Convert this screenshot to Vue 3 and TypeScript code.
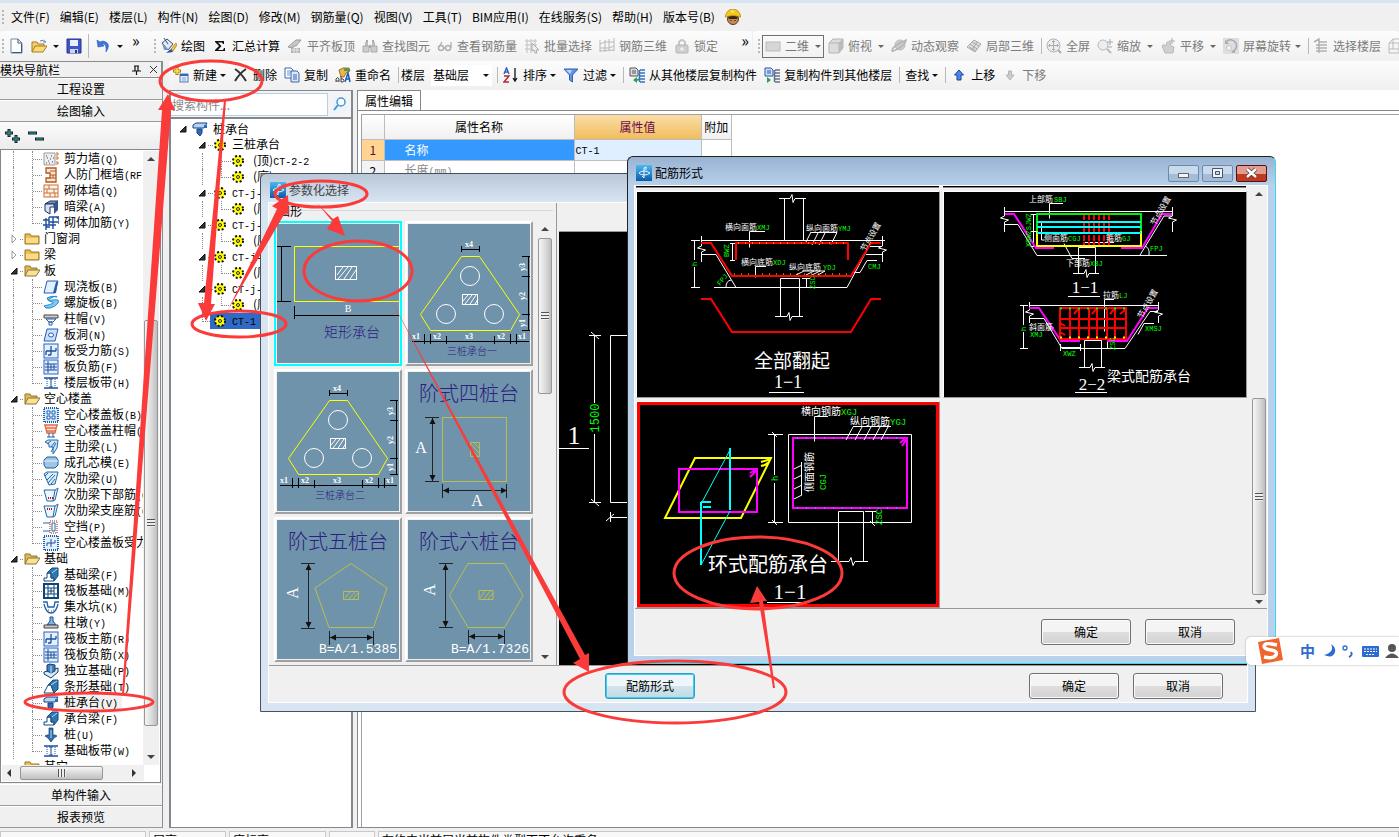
<script setup lang="ts">
interface Tool { icon?: string; text?: string; arrow?: boolean; off?: boolean; sep?: boolean; tight?: boolean }
interface NavRow { level: 0 | 1; icon: string; text: string; k?: string; open?: boolean; last?: boolean; active?: boolean; tail?: boolean }
interface PartRow { level: number; text?: string; k?: string; sel?: boolean; last?: boolean }

const menus = ['文件(F)', '编辑(E)', '楼层(L)', '构件(N)', '绘图(D)', '修改(M)', '钢筋量(Q)', '视图(V)', '工具(T)', 'BIM应用(I)', '在线服务(S)', '帮助(H)', '版本号(B)']

const drawTools: Tool[] = [
  { icon: 'paint', text: '绘图' }, { icon: 'sigma', text: '汇总计算' },
  { icon: 'align', text: '平齐板顶', off: true }, { icon: 'bino', text: '查找图元', off: true },
  { icon: 'glasses', text: '查看钢筋量', off: true }, { icon: 'batch', text: '批量选择', off: true },
  { icon: 'grid3', text: '钢筋三维', off: true }, { icon: 'lock', text: '锁定', off: true },
]
const viewTools: Tool[] = [
  { icon: 'cube', text: '俯视', arrow: true, off: true }, { icon: 'orbit', text: '动态观察', off: true },
  { icon: 'part', text: '局部三维', off: true }, { sep: true },
  { icon: 'full', text: '全屏', off: true }, { icon: 'zoom', text: '缩放', arrow: true, off: true },
  { icon: 'pan', text: '平移', arrow: true, off: true }, { icon: 'spin', text: '屏幕旋转', arrow: true, off: true, tight: true },
  { sep: true }, { icon: 'floors', text: '选择楼层', off: true }, { icon: 'wire', text: '', off: true },
]
const nav: NavRow[] = [
  { level: 1, icon: 'wall', text: '剪力墙', k: '(Q)' }, { level: 1, icon: 'frame', text: '人防门框墙', k: '(RF)' },
  { level: 1, icon: 'brick', text: '砌体墙', k: '(Q)' }, { level: 1, icon: 'beam', text: '暗梁', k: '(A)' },
  { level: 1, icon: 'rebar', text: '砌体加筋', k: '(Y)', last: true },
  { level: 0, icon: 'folder', text: '门窗洞' }, { level: 0, icon: 'folder', text: '梁' },
  { level: 0, icon: 'folderOpen', text: '板', open: true },
  { level: 1, icon: 'slab', text: '现浇板', k: '(B)' }, { level: 1, icon: 'spiral', text: '螺旋板', k: '(B)' },
  { level: 1, icon: 'cap', text: '柱帽', k: '(V)' }, { level: 1, icon: 'hole', text: '板洞', k: '(N)' },
  { level: 1, icon: 'barA', text: '板受力筋', k: '(S)' }, { level: 1, icon: 'barB', text: '板负筋', k: '(F)' },
  { level: 1, icon: 'strip', text: '楼层板带', k: '(H)', last: true },
  { level: 0, icon: 'folderOpen', text: '空心楼盖', open: true },
  { level: 1, icon: 'hollow', text: '空心楼盖板', k: '(B)' }, { level: 1, icon: 'hcap', text: '空心楼盖柱帽', k: '(V)' },
  { level: 1, icon: 'rib', text: '主肋梁', k: '(L)' }, { level: 1, icon: 'core', text: '成孔芯模', k: '(E)' },
  { level: 1, icon: 'rib2', text: '次肋梁', k: '(U)' }, { level: 1, icon: 'rib3', text: '次肋梁下部筋', k: '(G)' },
  { level: 1, icon: 'rib4', text: '次肋梁支座筋', k: '(C)' }, { level: 1, icon: 'gap', text: '空挡', k: '(P)' },
  { level: 1, icon: 'hbar', text: '空心楼盖板受力筋', last: true },
  { level: 0, icon: 'folderOpen', text: '基础', open: true },
  { level: 1, icon: 'fbeam', text: '基础梁', k: '(F)' }, { level: 1, icon: 'raft', text: '筏板基础', k: '(M)' },
  { level: 1, icon: 'sump', text: '集水坑', k: '(K)' }, { level: 1, icon: 'pier', text: '柱墩', k: '(Y)' },
  { level: 1, icon: 'barA', text: '筏板主筋', k: '(R)' }, { level: 1, icon: 'barB', text: '筏板负筋', k: '(X)' },
  { level: 1, icon: 'single', text: '独立基础', k: '(P)' }, { level: 1, icon: 'stripf', text: '条形基础', k: '(T)' },
  { level: 1, icon: 'pilecap', text: '桩承台', k: '(V)', active: true }, { level: 1, icon: 'fbeam', text: '承台梁', k: '(F)' },
  { level: 1, icon: 'pile', text: '桩', k: '(U)' }, { level: 1, icon: 'strip', text: '基础板带', k: '(W)', last: true },
  { level: 0, icon: 'folder', text: '其它', tail: true },
]
const parts: PartRow[] = [
  { level: 1, text: '三桩承台' }, { level: 2, text: '(顶)', k: 'CT-2-2' }, { level: 2, text: '(底)', k: 'CT-2-1', last: true },
  { level: 1, k: 'CT-j-1' }, { level: 2, text: '(底)', k: 'CT-j-1', last: true },
  { level: 1, k: 'CT-j-2' }, { level: 2, text: '(底)', k: 'CT-j-2', last: true },
  { level: 1, k: 'CT-j-3' }, { level: 2, text: '(底)', k: 'CT-j-3', last: true },
  { level: 1, k: 'CT-j-4' }, { level: 2, text: '(底)', k: 'CT-j-4', last: true },
  { level: 3, k: 'CT-1', sel: true },
]

const B = '#1d4f9c'
const bx = (s: string) => `<rect x="1" y="1" width="14" height="14" fill="#e4f0fd" stroke="#2b62c4"/>${s}`
const icons: Record<string, string> = {
  newdoc: '<path d="M3 1h7l4 4v10H3z" fill="#fff" stroke="#7388a8"/><path d="M10 1v4h4M13.500 6v8.500H4" fill="none" stroke="#3d5578"/>',
  open: '<path d="M1 14V4h5l1 2h6v3" fill="#f5cf6b" stroke="#a67c22"/><path d="M1 14l3-6h12l-4 6z" fill="#fbd978" stroke="#a67c22"/><path d="M9 3q4-2 6 1l-3 0" fill="none" stroke="#5f83b4"/>',
  save: '<path d="M1 1h14v14H1z" fill="#3e54c8" stroke="#26338a"/><path d="M4 2h8v6H4z" fill="#e9edff"/><path d="M4 11h8v4H4z" fill="#cdd4f2"/><path d="M9 12h2v3H9z" fill="#26338a"/>',
  undo: '<path d="M2 2l1 7 6-1-2-2q5-1 4 8 6-9-3-11L5 4z" fill="#3f77e0" stroke="#2a57b4" stroke-width=".6"/>',
  paint: '<path d="M1 5l5-4 6 5-5 6z" fill="#dfe8f3" stroke="#35507e"/><path d="M1 5l6 7-4 0z" fill="#7c95bb"/><path d="M3 0l4 6" stroke="#35507e"/><path d="M15 5l-5 6 2 2 4-6z" fill="#f5c33b" stroke="#a3741b" stroke-width=".7"/><path d="M10 11l-5 4 7-1z" fill="#214fa8"/>',
  sigma: '<path d="M3 3h9v3h-1l-1-1.500H6l3.500 3.500L6 12h5l1-2h1v3H3v-1l4-4-4-4z" fill="#111"/>',
  align: '<path d="M1 9l8-7 5 0-5 6H6l0 2z" fill="#c9c9c9" stroke="#999"/><path d="M4 10h9v5H4z" fill="#b5b5b5"/><path d="M5 12h7M7 10v5M10 10v5" stroke="#e8e8e8"/>',
  bino: '<path d="M3 4h3v4H3zM10 4h3v4h-3z" fill="#bbb"/><path d="M1 8h6v6H1zM9 8h6v6H9z" fill="#ccc" stroke="#aaa"/><path d="M7 7h2v3H7zM4 2h2v2H4zM10 2h2v2h-2z" fill="#aaa"/>',
  glasses: '<circle cx="4" cy="10" r="2.500" fill="none" stroke="#b0b0b0" stroke-width="1.500"/><circle cx="11" cy="10" r="2.500" fill="none" stroke="#b0b0b0" stroke-width="1.500"/><path d="M7 10h1M2 9l3-5M14 10V4" stroke="#b0b0b0" stroke-width="1.300" fill="none"/>',
  batch: '<path d="M1 3h12M1 7h12M1 11h9M3 1v14M7 1v14M11 1v7" stroke="#c0c0c0" fill="none"/><path d="M8 5l7 7-3 0 1 3-2 0-1-3-2 1z" fill="#eee" stroke="#aaa"/>',
  grid3: '<path d="M1 2v12M6 2v12M10 1v12M15 0v13M1 6l5-2h9M1 10h9l5-2M1 13l14-1" stroke="#b9b9b9" fill="none"/>',
  lock: '<path d="M5 7V4q3-4 6 0v3" fill="none" stroke="#c6c6c6" stroke-width="2"/><rect x="2" y="7" width="12" height="8" rx="1" fill="#cfcfcf" stroke="#b5b5b5"/><path d="M8 9v4M6 11h4" stroke="#eee" stroke-width="1.500"/>',
  plane: '<rect x="1" y="4" width="14" height="9" fill="#d6d6d6" stroke="#bababa"/>',
  cube: '<path d="M1 5h10v10H1zM1 5l4-4h10l-4 4M15 1v9l-4 5" fill="#dcdcdc" stroke="#b5b5b5"/><path d="M11 5l4-4v9l-4 5z" fill="#bcbcbc"/>',
  orbit: '<circle cx="9" cy="7" r="5" fill="#ccc" stroke="#bbb"/><path d="M1 13q0-4 8-8t6-3q0 4-7 8t-7 3z" fill="none" stroke="#b5b5b5" stroke-width="1.500"/>',
  part: '<path d="M1 9l7-7 7 4-6 8z" fill="#ddd" stroke="#aaa"/><path d="M4 6l7 5M6 4l7 4M6 12l5-8M3 9l7 4" stroke="#aaa" fill="none"/>',
  full: '<circle cx="7.500" cy="7.500" r="6.500" fill="#eee" stroke="#b0b0b0"/><path d="M7.500 3v9M3 7.500h9M6 4l1.500-1.500L9 4M6 11l1.500 1.500L9 11M4 6L2.500 7.500 4 9M11 6l1.500 1.500L11 9" stroke="#aaa" fill="none"/><path d="M12 12l3 3" stroke="#aaa" stroke-width="2"/>',
  zoom: '<circle cx="6" cy="7" r="5" fill="#eee" stroke="#b8b8b8"/><path d="M10 11l4 4" stroke="#b8b8b8" stroke-width="2"/><path d="M13 1v6M10 4h6M11 9h4" stroke="#aaa"/>',
  pan: '<path d="M2 8q2-3 4 0l1-4 3 0 1 4 3 1-1 6H5z" fill="#d0d0d0" stroke="#b8b8b8"/><path d="M12 0v6M9 3h6" stroke="#aaa"/>',
  spin: '<path d="M0 0h16v16H0z" fill="#dedede"/><path d="M3 4q5-5 10 1 2 6-4 9" fill="none" stroke="#aaa" stroke-width="1.500"/><path d="M8 14l4-2v3zM2 2v4h4" fill="#aaa"/><circle cx="6" cy="10" r="2.500" fill="#f3f3f3" stroke="#c5c5c5"/>',
  floors: '<path d="M1 4l5-3v3h8M6 4v11M3 7h11M3 10h11M3 13h11" stroke="#b0b0b0" fill="none" stroke-width="1.500"/>',
  wire: '<path d="M1 5h10v10H1zM1 5l4-4h10v10l-4 4M11 5l4-4M5 1v10H1M5 11h10" stroke="#bbb" fill="none"/>',
  create: '<path d="M4 0v8M0 4h8" stroke="#a67c00" stroke-width="3"/><path d="M4 1v6M1 4h6" stroke="#ffe24a" stroke-width="1.500"/><rect x="7" y="7" width="8" height="8" fill="#e4eefb" stroke="#5079b5"/><path d="M7 8h8" stroke="#3667b3" stroke-width="2"/><path d="M9 11h4M9 13h4" stroke="#7da0cf"/>',
  del: '<path d="M2 2q6 4 11 12M13 2Q7 6 2 14" stroke="#333" stroke-width="2" fill="none"/>',
  copy: '<path d="M1 1h6l2 2v8H1z" fill="#fff" stroke="#3f67a8"/><path d="M3 4h4M3 6h4M3 8h3" stroke="#6b93d2"/><path d="M7 4h6l2 2v9H7z" fill="#dbe8fa" stroke="#3f67a8"/><path d="M9 8h4M9 10h4M9 12h4" stroke="#3f67a8"/>',
  rename: '<path d="M4 3l4-2h6l1 3-4 2-2 4-3 0z" fill="#f1b44b" stroke="#7d5a1a" stroke-width=".8"/><path d="M9 1h5v3h-5z" fill="#5a9a4a"/><path d="M1 15v-3q2-3 3 0v3M1 14h3M6 9v6h2q2-2 0-3H6" stroke="#444" fill="none"/><path d="M10 15l3-9 2 9M11 12h4" stroke="#1f57b5" stroke-width="1.500" fill="none"/>',
  sort: '<path d="M1 7l2.500-6L6 7M2 5h3" stroke="#2f5ebd" stroke-width="1.400" fill="none"/><path d="M1 9h5l-5 6h5" stroke="#b02b3a" stroke-width="1.400" fill="none"/><path d="M12 1v13M10 11l2 3 2-3" stroke="#111" stroke-width="1.300" fill="none"/>',
  filter: '<path d="M1 2h14L9.500 8v7l-3-2V8z" fill="#5d94e3" stroke="#2f62b7"/><path d="M3 3h6L7 7z" fill="#bcd6fa"/>',
  from: '<path d="M1 1h6l2 2v6H1z" fill="#ddd" stroke="#555"/><path d="M3 4h4M3 6h4" stroke="#555"/><path d="M8 10l-4 3 4 3v-2q2 0 3-3-2 1-3 1z" fill="#29a34a"/><path d="M11 3h5M11 6h5M11 9h5M11 12h5M11 15h5M10.500 3v12" stroke="#3673c4" stroke-width="1.500"/>',
  to: '<path d="M1 1h6l2 2v6H1z" fill="#cfe0fa" stroke="#2c54a0"/><path d="M3 4h4M3 6h4" stroke="#2c54a0"/><path d="M3 10l4 3-4 3z" fill="#29a34a"/><path d="M11 3h5M11 6h5M11 9h5M11 12h5M11 15h5M10.500 3v12" stroke="#60708a" stroke-width="1.500"/>',
  up: '<path d="M8 3l4.500 5H10v5H6V8H3.500z" fill="#4d86ea" stroke="#1d4496"/>',
  down: '<path d="M8 13l4-5h-2.500V4h-3v4H4z" fill="#ccc" stroke="#b5b5b5"/>',
  wall: '<path d="M1 2h11v12H1z" fill="#eee" stroke="#999"/><path d="M3 12h1M5 10h1M4 7h1M7 8h1M9 11h1M8 5h1M10 7h1M6 12h1M3 5h1" stroke="#444"/><path d="M13 2h2v2h-2M13 6h2v2h-2M13 11h2v2h-2" fill="#fff" stroke="#d26a2c"/>',
  frame: '<path d="M3 1h10v14H3v-4h4V6H3z" fill="#fbe6d5" stroke="#b5561f" stroke-width="1.300"/><path d="M7 4h6M7 8h6M7 11h6M10 8v3" stroke="#b5561f"/>',
  brick: '<rect x="1" y="2" width="14" height="12" fill="#fff3ea" stroke="#c8703b"/><path d="M1 6h14M1 10h14M6 2v4M11 6v4M4 6v4M7 10v4M12 10v4" stroke="#c8703b"/>',
  beam: '<path d="M2 5l5-3 8 0-4 3z" fill="#7c95bd" stroke="#1b335f"/><path d="M2 5h9v3H7v7l-5-3z" fill="#d7e2f2" stroke="#1b335f"/><path d="M11 5l4-3v9l-4 4z" fill="#31548d"/>',
  rebar: `<path d="M0 5h6M0 10h6M3 3v12M3 12h4M10 2v12M6 2h10M6 7h9M13 2l3 2v5M6 2v8h7" stroke="${B}" stroke-width="1.400" fill="none"/>`,
  folder: '<path d="M1 13V3h5l1 2h8v8z" fill="#eebf4e" stroke="#9b7424"/><path d="M2 7h12v5H2z" fill="#f9dc87"/>',
  folderOpen: '<path d="M1 13V3h5l1 2h6v3" fill="#e5b94f" stroke="#8c7434"/><path d="M1 13l3-6h12l-4 6z" fill="#fbe196" stroke="#8c7434"/>',
  slab: '<path d="M4 2h11l-3 12H1z" fill="#e1efff" stroke="#245cb2"/><path d="M13 3l-3 11h3l2-12z" fill="#245cb2"/>',
  spiral: '<path d="M14 2q-5-2-10 1 0 3 5 4t-8 4q1 3 6 2t8-5-5-3-2-2 6-1z" fill="#7fc8f2" stroke="#2388c9"/>',
  cap: '<path d="M1 4h14v3H1z" fill="#cfcfcf" stroke="#444"/><path d="M3 8h10l-3 3H6zM6 11h3v3H6z" fill="#fff" stroke="#2559ab"/>',
  hole: '<path d="M4 2h11l-3 12H1z" fill="#c9e0fb" stroke="#245cb2"/><ellipse cx="8" cy="8" rx="2.500" ry="2" fill="#fff" stroke="#245cb2"/>',
  barA: bx(`<path d="M3 8h10M8 3v9M3 8v4M13 8V5M5 12h3" stroke="${B}" stroke-width="1.300" fill="none"/>`),
  barB: bx(`<path d="M2 5h12M2 11h12M5 2v12M11 5v6M8 5v6M2 8h12" stroke="${B}" fill="none"/>`),
  strip: `<path d="M1 3h14M1 13h14" stroke="${B}" stroke-width="1.500"/><path d="M4 4v8M12 4v8" stroke="${B}" stroke-dasharray="1 1"/><path d="M8 4v8M6 4h4M6 12h4" stroke="${B}"/>`,
  hollow: '<rect x="1" y="1" width="14" height="14" fill="#d4e9fb" stroke="#1e5fae" stroke-dasharray="1 1" stroke-width="2"/><path d="M4 4h3v3H4zM9 4h3v3H9zM4 9h3v3H4zM9 9h3v3H9z" fill="#fff" stroke="#1e5fae"/>',
  hcap: '<path d="M1 2h14M3 5h10M3 8h10M2 2l2 8h8l2-8" stroke="#e06b43" stroke-width="1.300" fill="#fde5da"/><path d="M6 10v4M10 10v4M4 14h8" stroke="#1e5fae"/>',
  rib: '<path d="M2 3l3-2h10l-1 8-4 6V8H6V5z" fill="#d2e7f8" stroke="#1f68a8"/><path d="M8 13l5-9M4 5l4-3M8 8l4-5" stroke="#1f68a8"/>',
  core: '<path d="M1 5l3-3h9l2 3v5l-3 3H3l-2-3z" fill="#9cc7e8" stroke="#1f5f97"/><path d="M1 6h14" stroke="#e9f5ff"/>',
  rib2: '<path d="M1 3l3-2h11l-3 12-6 1z" fill="#dceefb" stroke="#1f68a8"/><path d="M4 9l6-6M5 12l7-8M8 13l4-5M2 5l3-3" stroke="#1f68a8"/>',
  rib3: '<path d="M1 3h11l-2 11H4zM12 3l3-2-3 12-2 1" fill="#eef6fd" stroke="#1f68a8"/><path d="M5 11h1M7 11h1M9 11h1" stroke="#b01919" stroke-width="2"/>',
  rib4: '<path d="M1 3h11l-2 11H4zM12 3l3-2-3 12-2 1" fill="#eef6fd" stroke="#1f68a8"/><path d="M4 6h1M6 6h1M8 6h1" stroke="#b01919" stroke-width="2"/>',
  gap: '<path d="M0 4h7M0 12h7M9 4h3v8H9z" stroke="#1f68a8" fill="none"/><path d="M7 2h7v12H7z" fill="none" stroke="#a92222" stroke-dasharray="1 1"/>',
  hbar: `<rect x="1" y="1" width="14" height="14" fill="#e4f0fd" stroke="#1e5fae" stroke-dasharray="1 1" stroke-width="2"/><path d="M4 8h8M8 4v8M4 8v3M12 8V5" stroke="${B}" fill="none"/>`,
  fbeam: '<path d="M1 14v-3h3V6h4v5h3v3z" fill="#fff" stroke="#154a7e"/><path d="M4 6l5-5h6v8l-4 5v-3L8 11V6z" fill="#2f78b4" stroke="#154a7e"/><path d="M9 6l5-4" stroke="#b8dcf4"/>',
  raft: '<rect x="1" y="1" width="14" height="14" fill="#fff" stroke="#0f4477" stroke-width="2"/><path d="M2 5h12M2 11h12M5 2v12M11 2v12M5 8h6M8 5v6" stroke="#0f4477"/>',
  sump: '<path d="M0 3h4l1 5h6l1-5h4M1 5q2 9 7 9t7-9" fill="none" stroke="#1e62a8" stroke-width="1.300"/><path d="M5 11h1M8 12h1M10 11h1" stroke="#1e62a8"/>',
  pier: '<path d="M7 2h3v4l3 4H4l3-4z" fill="#7fb4e4" stroke="#1e4f93"/><path d="M1 10h14v3H1z" fill="#c9c9c9" stroke="#444"/>',
  single: '<path d="M1 9l7-2 7-2v4l-7 6-7-4z" fill="#d7eafa" stroke="#123f70"/><path d="M4 2l3-1 5 1v6L8 10 4 8z" fill="#3f7fba" stroke="#123f70"/><path d="M8 3v7" stroke="#cfe5f8"/>',
  stripf: '<path d="M1 14l4-8h3l3 8z" fill="#fff" stroke="#154a7e"/><path d="M5 6l5-5h5v9l-4 4-3-8z" fill="#2f78b4" stroke="#154a7e"/><path d="M8 6l6-4" stroke="#b8dcf4"/>',
  pilecap: '<path d="M1 4l3-2h11l-3 5H1z" fill="#b4d4f4" stroke="#173f85"/><path d="M5 8h5v4l-2 3-3-3z" fill="#2d6bb8" stroke="#173f85"/><path d="M12 4h3v3l-3 0z" fill="#2d6bb8"/>',
  pile: '<path d="M6 1h4v7h2l2 1-3 2-3 4-3-4-3-2 2-1h2z" fill="#2f6bae" stroke="#123f70" stroke-width=".7"/><path d="M8 3v8" stroke="#b8dcf4"/>',
  gear: '<circle cx="6" cy="6" r="5" fill="#ff0" stroke="#111" stroke-width="2" stroke-dasharray="2 2"/><circle cx="6" cy="6" r="3.500" fill="#ff0"/><circle cx="6" cy="6" r="1.500" fill="#ff0" stroke="#222"/>',
  app: '<defs><linearGradient id="ag" x2="0" y2="1"><stop stop-color="#4db9f0"/><stop offset="1" stop-color="#0a5ba8"/></linearGradient></defs><rect width="16" height="16" fill="url(#ag)"/><path d="M8 13V3l2-1v3M3 8q2-2 5-2t6 2q-2 2-6 2T3 8M8 13l-2-2" fill="none" stroke="#e8f6ff"/>',
}
const triples = [{ v: '408 224 122 139', t: '三桩承台一' }, { v: '409 228 122 139', t: '三桩承台二' }]
const spans = [{ x: 416, t: 'x1' }, { x: 437, t: 'x2' }, { x: 469, t: 'x3' }, { x: 501, t: 'x2' }, { x: 522, t: 'x1' }]
</script>

<template>
  <div class="app">
    <div class="strip"></div>
    <nav class="menubar">
      <i class="grip"></i>
      <button v-for="m in menus" :key="m" class="menu">{{ m }}</button>
      <svg class="face" width="16" height="16" viewBox="0 0 16 16" aria-hidden="true">
        <circle cx="8" cy="10" r="5.500" fill="#c98a5a" stroke="#5a3a22" />
        <path d="M0 8q2-8 8-8t8 8q-8-3-16 0z" fill="#f5c61e" stroke="#a8820d" stroke-width=".7" />
        <path d="M3 8q5-2 10 0l-1 2H4z" fill="#3b2416" /><path d="M6 11v1M10 11v1" stroke="#111" /><path d="M6 2l2 0v2" stroke="#fff2a0" fill="none" />
      </svg>
    </nav>

    <div class="bars">
      <div class="bar file">
        <i class="grip"></i>
        <button class="ib" aria-label="新建"><svg width="16" height="16" v-html="icons.newdoc"></svg></button>
        <button class="ib opn" aria-label="打开"><svg width="16" height="16" v-html="icons.open"></svg><b class="arr"></b></button>
        <button class="ib" aria-label="保存"><svg width="16" height="16" v-html="icons.save"></svg></button>
        <i class="sep tall"></i>
        <button class="ib opn" aria-label="撤销"><svg width="16" height="16" v-html="icons.undo"></svg><b class="arr"></b></button>
        <span class="more">»</span>
      </div>
      <div class="bar draw">
        <i class="grip"></i>
        <button v-for="t in drawTools" :key="t.text" class="tool" :class="{ off: t.off }">
          <svg width="16" height="16" v-html="icons[t.icon!]"></svg>{{ t.text }}
        </button>
        <span class="more end">»</span>
      </div>
      <div class="bar view">
        <i class="grip"></i>
        <button class="combo"><svg width="16" height="16" v-html="icons.plane"></svg>二维<b class="arr dim"></b></button>
        <template v-for="(t, i) in viewTools" :key="i">
          <i v-if="t.sep" class="sep"></i>
          <button v-else class="tool off" :class="{ tight: t.tight }">
            <svg width="16" height="16" v-html="icons[t.icon!]"></svg>{{ t.text }}<b v-if="t.arrow" class="arr"></b>
          </button>
        </template>
      </div>
    </div>

    <div class="main">
      <aside class="side">
        <header class="sidehead"><span>模块导航栏</span>
          <svg width="30" height="12" viewBox="0 0 30 12"><path d="M3 2h5M4 2v5M7 2v5M1 7h9M5.500 7v4" stroke="#111" fill="none" stroke-width="1.200" /><path d="M19 2l7 7M26 2l-7 7" stroke="#333" /></svg>
        </header>
        <button class="sbtn">工程设置</button>
        <button class="sbtn">绘图输入</button>
        <div class="expand">
          <svg width="44" height="18" viewBox="0 0 44 18"><g fill="none" stroke="#123" stroke-width="3"><path d="M5 5h8M9 1v8M12 11h8M16 7v8M28 5h9M35 11h9" /></g><g fill="none" stroke="#3ba58c"><path d="M6 5h6M9 2v6M13 11h6M16 8v6M29 5h7M36 11h7" /></g></svg>
        </div>
        <div class="navframe">
          <div class="navrow">
            <div class="navlist">
              <div v-for="(r, i) in nav" :key="i" class="nrow" :class="['l' + r.level, { last: r.last, active: r.active, tail: r.tail }]">
                <template v-if="r.level === 1"><i class="guide"></i><i class="elbow"></i></template>
                <template v-else>
                  <svg class="tog" width="12" height="12" viewBox="0 0 12 12"><path v-if="r.open" d="M9 3v6H3z" fill="#333" stroke="#111" /><path v-else-if="!r.tail" d="M4 2l4 4-4 4z" fill="#fff" stroke="#999" /></svg><i class="dots"></i>
                </template>
                <svg class="ic" width="16" height="16" v-html="icons[r.icon]"></svg>
                <span class="lb">{{ r.text }}<span class="k">{{ r.k }}</span></span>
              </div>
            </div>
            <div class="vs nv"><b class="au"></b><div class="thumb"><i></i></div><b class="ad"></b></div>
          </div>
          <div class="hs"><b class="al"></b><div class="hthumb"><i></i></div><b class="arr2"></b></div>
        </div>
        <button class="sbtn">单构件输入</button>
        <button class="sbtn">报表预览</button>
      </aside>

      <section class="work">
        <div class="bar2">
          <button class="tool"><svg width="16" height="16" v-html="icons.create"></svg>新建<b class="arr"></b></button>
          <button class="tool"><svg width="16" height="16" v-html="icons.del"></svg>删除</button>
          <button class="tool"><svg width="16" height="16" v-html="icons.copy"></svg>复制</button>
          <button class="tool"><svg width="16" height="16" v-html="icons.rename"></svg>重命名</button>
          <i class="sep"></i>
          <label class="lab" for="floor">楼层</label>
          <span class="fsel"><select id="floor"><option>基础层</option></select><b class="arr"></b></span>
          <i class="sep"></i>
          <button class="tool"><svg width="16" height="16" v-html="icons.sort"></svg>排序<b class="arr"></b></button>
          <button class="tool"><svg width="16" height="16" v-html="icons.filter"></svg>过滤<b class="arr"></b></button>
          <i class="sep"></i>
          <button class="tool"><svg width="16" height="16" v-html="icons.from"></svg>从其他楼层复制构件</button>
          <button class="tool"><svg width="16" height="16" v-html="icons.to"></svg>复制构件到其他楼层</button>
          <i class="sep"></i>
          <button class="tool">查找<b class="arr"></b></button>
          <i class="sep"></i>
          <button class="tool"><svg width="16" height="16" v-html="icons.up"></svg>上移</button>
          <button class="tool off"><svg width="16" height="16" v-html="icons.down"></svg>下移</button>
        </div>
        <div class="panes">
          <div class="partpane">
            <div class="search">
              <input type="text" placeholder="搜索构件..." aria-label="搜索构件" />
              <svg width="14" height="14" viewBox="0 0 14 14"><rect width="14" height="14" fill="#e8f3fc" /><circle cx="8" cy="5" r="4" fill="#fff" stroke="#4a94d8" stroke-width="1.500" /><path d="M5 8l-4 5" stroke="#4a94d8" stroke-width="2" /></svg>
            </div>
            <div class="parttree">
              <div class="prow root"><svg class="tog" width="12" height="12" viewBox="0 0 12 12"><path d="M9 3v6H3z" fill="#333" stroke="#111" /></svg><svg width="16" height="16" v-html="icons.pilecap"></svg><span>桩承台</span></div>
              <div v-for="(p, i) in parts" :key="i" class="prow" :class="['p' + p.level, { last: p.last, sel: p.sel }]">
                <svg v-if="p.level === 1" class="tog" width="12" height="12" viewBox="0 0 12 12"><path d="M9 3v6H3z" fill="#333" stroke="#111" /></svg>
                <i v-else-if="p.level === 2" class="pg"></i>
                <i class="pe"></i>
                <span class="pl"><svg width="12" height="12" v-html="icons.gear"></svg><span>{{ p.text }}<span class="k">{{ p.k }}</span></span></span>
              </div>
            </div>
          </div>
          <div class="propane">
            <div class="tabs"><button class="tab">属性编辑</button></div>
            <div class="propbody">
              <table class="props">
                <thead><tr><th class="n"></th><th class="nm">属性名称</th><th class="vl">属性值</th><th class="ex">附加</th></tr></thead>
                <tbody>
                  <tr class="cur"><td class="n">1</td><td class="nm">名称</td><td class="vl"><span class="k">CT-1</span></td><td></td></tr>
                  <tr><td class="n">2</td><td class="nm gray">长度<span class="k">(mm)</span></td><td class="vl"></td><td></td></tr>
                </tbody>
              </table>
            </div>
          </div>
        </div>
      </section>
    </div>
    <footer class="status"><span class="s1"></span><span class="s2">层高:</span><span class="s3">底标高:</span><span class="s4"></span><span class="s5">在约中当前层当前构件类型下不允许重名</span></footer>

    <section class="win w1" role="dialog" aria-label="参数化选择">
      <header class="wt"><svg width="16" height="16" v-html="icons.app"></svg>参数化选择</header>
      <div class="wc">
        <div class="wtop">
          <div class="shapes">
            <div class="legend">图形</div>
            <div class="shaperow">
              <div class="cells">
                <button class="cell picked" aria-label="矩形承台">
                  <svg width="122" height="139" viewBox="277 224 122 139"><g fill="none"><path d="M277 246.500h14M277 301.500h14M281.500 246v56M294.500 306v13M294 315.500h105" stroke="#000" /><path d="M399 246.500H294.500v55H399" stroke="#ff0" /><rect x="335.500" y="266.500" width="21" height="13" stroke="#fff" /><path d="M337 275l6-8M338 279l10-12M344 279l8-12M350 279l6-9" stroke="#fff" /></g><text x="348" y="312" class="tw" font-size="10">B</text><text x="352" y="337" class="tp" font-size="14">矩形承台</text></svg>
                </button>
                <button v-for="c in triples" :key="c.t" class="cell" :aria-label="c.t">
                  <svg width="122" height="139" :viewBox="c.v"><g fill="none"><path d="M461.500 256.500h18l40 58-9 16h-80l-10-16z" stroke="#ff0" /><g stroke="#fff"><circle cx="470" cy="276" r="9.500" /><circle cx="446" cy="314" r="9.500" /><circle cx="494" cy="314" r="9.500" /><rect x="462.500" y="294.500" width="15" height="10" /><path d="M463 301l5-6M465 304l7-9M470 304l6-9M475 304l3-5" /></g><path d="M461.500 246v6M479.500 246v6M461 249.500h18M528.500 256v75M522 256.500h8M522 276.500h8M522 314.500h8M522 330.500h8M412 341.500h117M424.500 334v10M430.500 334v10M446.500 336v8M494.500 336v8M510.500 334v10M516.500 334v10" stroke="#000" /></g>
                    <text x="469" y="247" class="tw bd" font-size="8">x4</text>
                    <text v-for="s in spans" :key="s.x" :x="s.x" y="339" class="tw bd" font-size="8">{{ s.t }}</text>
                    <text class="tw bd" font-size="8" transform="translate(525 267)rotate(-90)">y3</text><text class="tw bd" font-size="8" transform="translate(525 296)rotate(-90)">y2</text><text class="tw bd" font-size="8" transform="translate(525 323)rotate(-90)">y1</text>
                    <text x="472" y="355" class="tp" font-size="10">{{ c.t }}</text></svg>
                </button>
                <button class="cell" aria-label="阶式四桩台">
                  <svg width="122" height="139" viewBox="408 372 122 139"><text x="469" y="401" class="tp" font-size="20">阶式四桩台</text><rect x="442.500" y="417.500" width="64" height="64" class="ol" /><path d="M470.500 442.500h9v14h-9zM471 444l8 9M471 449l7 7M474 443l5 5" class="ol" /><path d="M425 417.500h14M425 481.500h14M432.500 418v63M442.500 484v14M506.500 484v14M443 490.500h64" stroke="#222" /><path d="M432.500 418l-3 6h6zM432.500 481l-3-6h6zM443 490.500l6-3v6zM507 490.500l-6-3v6z" fill="#111" /><text x="421" y="453" class="tw" font-size="16">A</text><text x="477" y="506" class="tw" font-size="16">A</text></svg>
                </button>
                <button class="cell" aria-label="阶式五桩台">
                  <svg width="122" height="139" viewBox="277 520 122 139"><text x="338" y="549" class="tp" font-size="20">阶式五桩台</text><path d="M351 563.500l36 24.500-13.500 39.500h-44.500L315 588z" class="ol" /><path d="M343.500 591.500h15v8h-15zM345 598l5-6M349 599l6-7M353 599l5-6" class="ol" /><path d="M301 563.500h14M301 628.500h14M308.500 564v64M329.500 631v14M373.500 631v14M329 637.500h44" stroke="#222" /><path d="M308.500 564l-3 6h6zM308.500 628l-3-6h6zM330 637.500l6-3v6zM373 637.500l-6-3v6z" fill="#111" /><text class="tw" font-size="16" transform="translate(298 593)rotate(-90)">A</text><text x="397" y="653" class="tm" font-size="13">B=A/1.5385</text></svg>
                </button>
                <button class="cell" aria-label="阶式六桩台">
                  <svg width="122" height="139" viewBox="408 520 122 139"><text x="469" y="549" class="tp" font-size="20">阶式六桩台</text><path d="M468 563.500h36.500l18.500 32-18.500 32H468l-18.500-32z" class="ol" /><path d="M479 590.500h14v9h-14zM480 598l5-7M484 599l6-8M488 599l5-6" class="ol" /><path d="M439 563.500h14M439 627.500h14M445.500 564v64M468.500 630v14M504.500 630v14M468 636.500h36" stroke="#222" /><path d="M445.500 564l-3 6h6zM445.500 627l-3-6h6zM469 636.500l6-3v6zM504 636.500l-6-3v6z" fill="#111" /><text class="tw" font-size="16" transform="translate(435 590)rotate(-90)">A</text><text x="529" y="653" class="tm" font-size="13">B=A/1.7326</text></svg>
                </button>
              </div>
              <div class="vs sv"><b class="au"></b><div class="thumb"><i></i></div><b class="ad"></b></div>
            </div>
          </div>
          <div class="preview">
            <div class="pvhead"></div>
            <div class="pvbody">
              <svg width="68" height="432" viewBox="559 233 68 432"><path d="M559 449.500h30M594.500 336v68M594.500 435v69M589 336.500h12M589 503.500h12M591 333l8 7M591 500l8 7M627 336.500H610.500v167H627M610.500 513v10M610 518.500h17M606 522l8-7" stroke="#fff" fill="none" /><text x="574" y="445" class="tw" font-size="26">1</text><text class="tg2" font-size="12" transform="translate(599 419)rotate(-90)">1500</text></svg>
            </div>
          </div>
        </div>
        <div class="foot f1">
          <button class="btn focus">配筋形式</button><span class="grow"></span><button class="btn">确定</button><button class="btn">取消</button>
        </div>
      </div>
    </section>

    <section class="win w2" role="dialog" aria-label="配筋形式">
      <header class="wt"><svg width="16" height="16" v-html="icons.app"></svg>配筋形式
        <span class="grow"></span>
        <button class="wb" aria-label="最小化"><svg width="28" height="15"><rect x="9.500" y="7.500" width="10" height="4" fill="#f4f4f4" stroke="#666" /></svg></button>
        <button class="wb" aria-label="最大化"><svg width="28" height="15"><path d="M9.500 2.500h10v9h-10zM12.500 5.500v3h4v-3z" fill="#f4f4f4" stroke="#44546a" fill-rule="evenodd" /></svg></button>
        <button class="wb red" aria-label="关闭"><svg width="28" height="15"><path d="M10 3l9 8M19 3l-9 8" stroke="#5c3030" stroke-width="4" /><path d="M10 3l9 8M19 3l-9 8" stroke="#fff" stroke-width="2.500" /></svg></button>
      </header>
      <div class="wc">
        <div class="wtop">
          <div class="forms">
            <div class="cutoff"></div><div class="cutoff"></div>
            <button class="form" aria-label="全部翻起">
              <svg width="302" height="205" viewBox="637 192 302 205">
                <g fill="none" stroke="#fff"><path d="M779 198.500h11l2-4 1 8 2-4h11M784.500 198v42M803.500 198v42M701 240.500h184M701.500 236v10l-4 2 8 2-4 2v10M701 254.500h15l20 33M714 287.500h133l22-41h13M882.500 236v10l-4 2 8 2-4 2v10M866 254.500h16M694.500 240v20M694.500 267v21M691 240.500h9M691 287.500h9M765 231.500h-15.500v16M811 232.500h26l-6 12M811 232l-6 12M818 233l-6 12M825 233l-6 12M732.500 244v17M730 243.500h5M730 260.500h5M766 266.500h-10.500v11M796 275l8-4h21l-9 5M806 275l8-4M812 275l8-4M780.500 316v-37.500h19V316M775 316.500h12l2-4 1 8 2-4h11M806.500 278v10M802 278.500h8M877 260.500h-10l-7 12h-8M726 287q0-6 5-7" /></g>
                <g fill="none" stroke="red" stroke-width="2"><path d="M701 243h10l21 33h119l20-33h10M736 260v-17h112v17M701 299h10l21 33h119l20-33h10" /></g>
                <path d="M738 243h110M734 274h116" stroke="#ff0" stroke-dasharray="1 6" />
                <g class="cj" font-size="8"><text x="725" y="230">横向面筋</text><text x="806" y="231">纵向面筋</text><text x="741" y="265">横向底筋</text><text x="789" y="270">纵向底筋</text><text transform="translate(865 252)rotate(-60)">节点设置</text></g>
                <g class="gr" font-size="7"><text x="757" y="230">XMJ</text><text x="838" y="231">YMJ</text><text x="773" y="265">XDJ</text><text x="823" y="270">YDJ</text><text x="868" y="269">CMJ</text><text transform="translate(729 257)rotate(-90)">BWZ</text><text transform="translate(815 289)rotate(-90)">ZSC</text><text transform="translate(720 286)rotate(-50)">FPJ</text><text transform="translate(697 266)rotate(-90)">h</text></g>
                <text x="792" y="368" class="cm" font-size="19">全部翻起</text><text x="788" y="388" class="tw" font-size="18">1−1</text><path d="M769 392.500h35" stroke="#fff" />
              </svg>
            </button>
            <button class="form" aria-label="梁式配筋承台">
              <svg width="302" height="205" viewBox="944 192 302 205">
                <g fill="none" stroke="#fff"><path d="M1004 211.500h168M1004.500 207v9l-4 2 8 2-4 2v10M1004 224.500h14l19 31h130M1140 255l24-39h8M1172.500 207v9l-4 2 8 2-4 2v10M1063 203.500h-13.500v15M1041.500 221v19h3M1033.500 214v32M1031 214.500h5M1031 231.500h5M1031 246.500h5M1083 242.500h31M1085 258.500h-13l-8-15M1078.500 273v-25.500h17V273M1073 273.500h11l2-4 1 8 2-4h10M1149 255q1-7-4-9M1029 305.500h130M1029.500 302v8l-4 2 8 2-4 2v7M1029 318.500h15l18 30h63l25-37h8M1158.500 302v8l-4 2 8 2-4 2v7M1023.500 305v20M1023.500 332v17M1020 305.500h8M1020 348.500h8M1114 299.500h-9.500v32M1060 347.500h20M1060.500 344v7M1080.500 344v7M1084.500 367v-26.500h17V367M1079 367.500h11l2-4 1 8 2-4h10M1154 323.500h-10l-6 11M1049 328h5M1068 296.500h32M1075 392.500h32M1107.500 341v8" /></g>
                <path d="M1084 214v32M1089 214v32M1094 214v32M1099 214v32M1104 214v32M1109 214v32" stroke="red" stroke-width="2" stroke-dasharray="6 1" />
                <g fill="none" stroke-width="2"><path d="M1037 231v-17h104v17" stroke="#0e0" /><path d="M1037 231v15h104v-15" stroke="#ff0" /><path d="M1037 222h104M1037 227h104M1037 233h104" stroke="cyan" /><path d="M1005 214h9l22 34h18M1121 248h21l20-34h10M1029 308h10l22 33h19M1107 341h20l21-33h10" stroke="#f0f" /><path d="M1060 308h66v31h-66zM1070 308v31M1079 308v31M1089 308v31M1097 308v31M1107 308v31M1115 308v31M1060 319h66M1060 328h66M1060 323l5 3M1060 332l5 3M1079 308l-5 6M1097 308l-5 6M1115 308l-5 6M1125 310l-5 4" stroke="red" /></g>
                <path d="M1060 308.500h67" stroke="#0f0" stroke-width="2" stroke-dasharray="2 7" /><path d="M1060 337.500h67" stroke="#ff0" stroke-width="2" stroke-dasharray="2 7" />
                <g class="cj" font-size="8"><text x="1029" y="202">上部筋</text><text x="1044" y="241">侧面筋</text><text x="1106" y="241">箍筋</text><text x="1066" y="266">下部筋</text><text x="1029" y="330">斜面筋</text><text x="1103" y="298">拉筋</text><text transform="translate(1155 226)rotate(-60)">节点设置</text><text transform="translate(1142 319)rotate(-60)">节点设置</text></g>
                <g class="gr" font-size="7"><text x="1054" y="202">SBJ</text><text x="1068" y="241">CGJ</text><text x="1122" y="241">GJ</text><text x="1090" y="266">XBJ</text><text x="1150" y="251">FPJ</text><text x="1030" y="337">XMJ</text><text x="1145" y="331">XMSJ</text><text x="1119" y="298">LJ</text><text x="1063" y="356">XWZ</text><text transform="translate(1031 247)rotate(-90)">XBWZSJWZ</text><text transform="translate(1115 350)rotate(-90)">ZSC</text><text transform="translate(1026 331)rotate(-90)">h</text></g>
                <text x="1085" y="293" class="tw" font-size="17">1−1</text><text x="1092" y="390" class="tw" font-size="17">2−2</text><text x="1149" y="381" class="cm" font-size="14">梁式配筋承台</text>
              </svg>
            </button>
            <button class="form on" aria-label="环式配筋承台">
              <svg width="302" height="205" viewBox="637 402 302 205">
                <g fill="none" stroke-width="2"><path d="M695 458h76l-30 60h-76zM771 459l-10 3M769 462l-6 4M768 464l-7 2" stroke="#ff0" /><path d="M679 469h78v43h-78zM757 469l-7 4M756 471l-6 6M793 438h114v70H793zM906 438l-6 5M906 440l-4 6" stroke="#f0f" /><path d="M730 448v62M701 502v63M701 502h10M703 507h8" stroke="cyan" /></g>
                <path d="M730 450l-29 54M701 565l29-54" stroke="cyan" fill="none" />
                <g fill="none" stroke="#fff"><path d="M788.500 434.500h123v88h-123zM774.500 434v41M774.500 483v40M768 434.500h15M768 522.500h15M772 432l5 5M772 520l5 5M828 416.500h-13.500v25M853 426.500h38M853 427l-7 13M862 427l-7 13M871 427l-7 13M880 427l-7 13M888 427l-7 13M801.500 462v33M794 469l8-4M794 479l8-4M794 489l8-4M794 499l8-4M838.500 561v-49.500h25V561M831 561.500h18l2-4 2 8 2-4h13M872.500 512v12M865 511.500h11M870 521l5 5M767 602.500h40" /></g>
                <path d="M797 438h108M797 508h108" stroke="#0ff" stroke-dasharray="1 8" />
                <g class="cj" font-size="10"><text x="801" y="415">横向钢筋</text><text x="850" y="425">纵向钢筋</text><text transform="translate(813 492)rotate(-90)">侧面钢筋</text></g>
                <g class="gr" font-size="9"><text x="841" y="415">XGJ</text><text x="890" y="425">YGJ</text><text transform="translate(826 490)rotate(-90)">CGJ</text><text transform="translate(882 525)rotate(-90)">ZSC</text><text transform="translate(778 481)rotate(-90)">h</text></g>
                <text x="768" y="572" class="cm" font-size="20">环式配筋承台</text><text x="790" y="599" class="tw" font-size="21">1−1</text>
              </svg>
            </button>
          </div>
          <div class="vs fv"><b class="au"></b><div class="thumb"><i></i></div><b class="ad"></b></div>
        </div>
        <div class="foot f2"><span class="grow"></span><button class="btn">确定</button><button class="btn">取消</button></div>
      </div>
    </section>

    <div class="ime">
      <svg width="28" height="28" viewBox="0 0 28 28"><path d="M2 5L23 1l4 22-21 4z" fill="#f0642d" /><path d="M21 8q-12-3-13 1 0 3 7 4t5 5-12 2" fill="none" stroke="#fff" stroke-width="3.500" /></svg>
      <i></i><span>中</span>
      <svg width="84" height="16" viewBox="0 0 84 16"><path d="M8 1q4 8-7 11 9 4 11-3 1-5-4-8z" fill="#2e6bd0" /><circle cx="22" cy="5" r="2" fill="none" stroke="#2e6bd0" stroke-width="1.300" /><path d="M28 9q2 3-2 5" stroke="#2e6bd0" stroke-width="2" fill="none" /><rect x="39" y="3" width="17" height="11" rx="1" fill="#2e6bd0" /><path d="M41 6h13M41 8.500h13M43 11.500h9" stroke="#fff" stroke-dasharray="2 1" /><circle cx="69" cy="5" r="4" fill="#555" /><path d="M62 15q7-9 14 0z" fill="#555" /></svg>
    </div>

    <svg class="marks" width="1399" height="837" viewBox="0 0 1399 837" aria-hidden="true">
      <g fill="none" stroke="#fb3a3a" stroke-width="3"><ellipse cx="211" cy="81" rx="51" ry="20" /><ellipse cx="321" cy="194" rx="46" ry="13" /><ellipse cx="358" cy="271" rx="54" ry="30" /><ellipse cx="239" cy="324" rx="47" ry="13" /><ellipse cx="89" cy="702" rx="64" ry="9" /><ellipse cx="675" cy="692" rx="111" ry="31" /><ellipse cx="758" cy="573" rx="84" ry="36" /></g>
      <g fill="#fb3a3a"><path d="M122 694L162 110l-4 0 10-16 7 16-4 0L124 694z" /><path d="M224 100l-20 203-6 0 8 18 9-17-4 0L226 100z" /><path d="M228 310l49-101-5-3 16-11 1 20-4-2z" /><path d="M317 203l15 18-5 8 18 7-7-20-5 3z" /><path d="M389 296l191 363-7 4 16 9 0-19-4 2z" /><path d="M773 688l-14-86-9 1 7-17 10 15-4 0L775 688z" /></g>
    </svg>
  </div>
</template>

<style>
html, body { margin: 0; height: 100%; overflow: hidden; background: #f0f0f0; }
</style>
<style scoped>
.app { position: relative; height: 100vh; display: flex; flex-direction: column; overflow: hidden; background: #f0f0f0; color: #000; font: 12px/16px "Noto Sans CJK SC", "Liberation Sans", sans-serif; }
.app * { box-sizing: border-box; }
button { font: inherit; color: inherit; border: 0; padding: 0; margin: 0; background: none; white-space: nowrap; }
svg { flex: none; display: block; }
.k { font: 10px/16px "Liberation Mono", monospace; }
.grow { flex: 1; }
.strip { flex: 0 0 3px; background: #d8e4f1; }
.menubar { flex: 0 0 28px; display: flex; align-items: center; gap: 10px; padding-left: 2px; }
.menubar .grip { margin-right: -3px; }
.grip { flex: none; width: 2px; height: 15px; background: repeating-linear-gradient(#b8b8b8 0 2px, transparent 2px 4px); }
.bars { flex: 0 0 30px; display: flex; }
.bar { display: flex; align-items: center; background: linear-gradient(#fcfcfc, #f0f0f0); border-radius: 3px; overflow: hidden; }
.bar .grip { margin-right: 5px; }
.file { width: 151px; padding-left: 2px; }
.ib { display: flex; align-items: center; }
.file .grip { margin-right: 4px; }
.opn { margin: 0 7px; }
.arr { width: 0; height: 0; border: 3px solid transparent; border-top-color: #111; border-bottom: 0; margin-left: 3px; flex: none; }
.file .arr { margin-left: 6px; }
.sep { flex: none; width: 1px; height: 16px; background: #b9b9b9; margin: 0 4px 0 0; }
.sep.tall { height: 24px; margin: 0 -1px 0 6px; }
.more { font-size: 16px; line-height: 18px; align-self: flex-start; margin-left: 2px; }
.more.end { margin-left: auto; margin-right: 3px; }
.draw { width: 601px; padding-left: 3px; margin-right: 1px; }
.tool { display: flex; align-items: center; gap: 4px; margin-right: 7px; flex: none; }
.off { color: #7b7b7b; }
.view { flex: 1; min-width: 0; padding-left: 5px; }
.view .grip { margin-right: 2px; }
.view .arr { margin: 0 0 0 2px; border-top-color: #666; }
.view .tight .arr { margin-left: 0; }
.combo { display: flex; align-items: center; gap: 4px; width: 62px; height: 23px; border: 1px solid #707070; padding-left: 2px; margin-right: 4px; color: #777; flex: none; }
.main { flex: 1; min-height: 0; display: flex; padding-bottom: 3px; }
.side { flex: 0 0 163px; min-width: 0; overflow: hidden; display: flex; flex-direction: column; border-right: 1px solid #8c8c8c; }
.sidehead { flex: 0 0 17px; display: flex; justify-content: space-between; align-items: center; border: 1px solid #8c8c8c; border-left: 0; line-height: 15px; }
.sbtn { flex: 0 0 22px; border-top: 1px solid #fff; border-bottom: 1px solid #9a9a9a; }
.expand { flex: 0 0 27px; background: linear-gradient(#fbfbfb, #ececec); padding-top: 6px; }
.navframe { flex: 1; min-height: 0; display: flex; flex-direction: column; background: #fff; border: 1px solid #828790; margin-right: 1px; padding: 1px; margin-bottom: 1px; }
.navrow { flex: 1; min-height: 0; display: flex; }
.navlist { flex: 1; min-width: 0; overflow: hidden; }
.nrow { display: flex; height: 16px; align-items: center; white-space: nowrap; }
.l1 { padding-left: 11px; }
.guide { flex: none; width: 19px; height: 16px; border-left: 1px dotted #888; }
.elbow, .pe { flex: none; width: 11px; height: 16px; border-left: 1px dotted #888; background: repeating-linear-gradient(90deg, #888 0 1px, transparent 1px 2px) 0 8px / 11px 1px no-repeat; }
.last .elbow { height: 9px; align-self: flex-start; }
.l1 .lb { margin-left: 5px; }
.active .lb { background: #f1f1f1; border-radius: 2px; padding-right: 4px; }
.l0 { padding-left: 6px; }
.l0 .lb { margin-left: 4px; }
.dots { width: 4px; height: 1px; background: repeating-linear-gradient(90deg, #888 0 1px, transparent 1px 2px); }
.tog { flex: none; }
.vs { flex: none; width: 16px; background: #f0f0f0; display: flex; flex-direction: column; align-items: center; }
.au, .ad { flex: none; border: 4px solid transparent; border-top: 0; border-bottom-color: #444; margin: 6px 0; }
.ad { border: 4px solid transparent; border-bottom: 0; border-top-color: #444; margin-top: auto; }
.thumb { flex: none; width: 14px; border: 1px solid #979797; border-radius: 2px; background: linear-gradient(90deg, #f5f5f5, #d8d8d8 60%, #bdbdc2); display: flex; align-items: center; justify-content: center; }
.thumb i { width: 8px; height: 8px; background: repeating-linear-gradient(#555 0 1px, #eee 1px 3px); }
.nv .thumb { margin-top: 153px; height: 406px; }
.hs { flex: 0 0 16px; width: 142px; background: #f0f0f0; display: flex; align-items: center; }
.al, .arr2 { border: 4px solid transparent; border-left: 0; border-right-color: #333; margin-left: 5px; }
.arr2 { border: 4px solid transparent; border-right: 0; border-left-color: #333; margin-left: 29px; }
.hthumb { margin-left: 9px; width: 83px; height: 14px; border: 1px solid #979797; border-radius: 2px; background: linear-gradient(#f5f5f5, #d5d5d5 60%, #c0c0c0); display: flex; align-items: center; justify-content: center; }
.hthumb i { width: 8px; height: 8px; background: repeating-linear-gradient(90deg, #555 0 1px, #eee 1px 3px); }
.work { flex: 1; min-width: 0; display: flex; flex-direction: column; padding-left: 6px; }
.bar2 { flex: 0 0 28px; display: flex; align-items: center; padding-left: 4px; background: linear-gradient(#fcfcfc, #f0f0f0); }
.bar2 .arr { margin-left: -1px; }
.bar2 .sep { margin-right: 5px; }
.lab { margin-left: -3px; }
.fsel { display: flex; align-items: center; width: 61px; height: 21px; background: #fff; margin: 0 5px 0 6px; padding-left: 2px; }
.fsel select { flex: 1; min-width: 0; appearance: none; border: 0; background: none; font: inherit; padding: 0; }
.bar2 .fsel .arr { margin: 0 3px; }
.panes { flex: 1; min-height: 0; display: flex; gap: 4px; padding-top: 1px; }
.partpane { flex: 0 0 184px; min-width: 0; border: 1px solid #828790; border-width: 1px 2px; background: #fff; display: flex; flex-direction: column; }
.search { flex: 0 0 28px; display: flex; align-items: center; gap: 5px; border-bottom: 2px solid #828790; background: #f4f4f4; }
.search input { width: 157px; height: 23px; border: 1px solid #b5cfe7; border-left: 0; padding: 0 0 0 1px; font: inherit; background: #fff; }
.search input::placeholder { color: #888; opacity: 1; }
.parttree { padding-top: 2px; }
.prow { display: flex; height: 16px; align-items: center; white-space: nowrap; }
.root { padding-left: 6px; }
.root > span { margin-left: 5px; }
.root > svg + svg { margin-left: 3px; }
.p1 { padding-left: 25px; }
.p1 .pe { border: 0; width: 6px; }
.p2 { padding-left: 31px; }
.pg { width: 19px; height: 16px; border-left: 1px dotted #888; }
.p3 { padding-left: 31px; }
.p3 .pe { width: 8px; height: 9px; align-self: flex-start; }
.p2.last .pe { height: 9px; align-self: flex-start; }
.pl { display: flex; align-items: center; height: 16px; flex: 1; }
.pl > svg { margin-right: 6px; }
.p2 .pl > svg { margin-right: 9px; }
.p3 .pl { background: #316ac5; padding-left: 4px; }
.propane { flex: 1; min-width: 0; background: #fff; border-left: 1px solid #828790; border-bottom: 1px solid #828790; display: flex; flex-direction: column; }
.tabs { flex: 0 0 20px; border-bottom: 1px solid #828790; }
.tab { width: 63px; height: 20px; background: #fff; border: 1px solid #828790; border-width: 1px 1px 0 0; }
.propbody { flex: 1; margin: 3px 0 0 3px; border: 1px solid #a0a0a0; border-width: 1px 0 0 1px; }
.props { border-collapse: collapse; table-layout: fixed; width: 370px; }
.props th { font-weight: 400; height: 24px; padding: 0; background: linear-gradient(#fff, #f0f0f0); border: 1px solid #bdbdbd; border-width: 0 1px 1px 0; }
.props td { height: 18px; padding: 0; line-height: 17px; border: 1px solid #bdbdbd; border-width: 0 1px 1px 0; }
.props .n { width: 22px; text-align: center; }
.props td.n { background: #f3f3f3; }
.props .nm { width: 190px; }
.props td.nm { padding-left: 20px; }
.props th.vl { width: 127px; background: linear-gradient(#fadda6, #f1bd5d); color: #6b0a4e; }
.props .cur .n { background: #ffd591; color: #700040; }
.props .cur .nm { background: #3399ff; color: #fff; }
.props .cur .vl { background: #e0efff; }
.props td.vl { padding-left: 1px; }
.gray { color: #888; }
.status { flex: 0 0 6px; display: flex; gap: 3px; overflow: hidden; }
.status span { flex: none; height: 20px; border: 1px solid #c8c8c8; background: #f8f8f8; padding-left: 3px; }
.s1 { width: 146px; }
.s2 { width: 77px; }
.s3 { width: 97px; }
.s4 { width: 46px; }
.status .s5 { flex: 1; }

.win { position: absolute; display: flex; flex-direction: column; border: 1px solid #4a5058; border-radius: 6px 6px 0 0; }
.w1 { left: 260px; top: 173px; width: 996px; height: 539px; padding: 0 7px 8px; background: linear-gradient(#b9c8d8, #d7e4f2 28px); }
.w2 { left: 627px; top: 156px; width: 649px; height: 508px; padding: 0 7px 7px 6px; background: linear-gradient(#98b3d2, #b9d1ea 29px); border-color: #222 #2ce0f0 #2ce0f0 #222; }
.wt { flex: 0 0 28px; display: flex; align-items: center; gap: 3px; padding: 3px 0 0 2px; }
.w1 .wt { color: #444; }
.w2 .wt { padding: 4px 1px 0 2px; }
.wb { width: 31px; height: 17px; border: 1px solid #6f87a8; border-radius: 2px; background: linear-gradient(#c9daec 50%, #a3bdd9 50%); margin-top: 1px; }
.red { background: linear-gradient(#e29c90 50%, #bf3a22 50%); border-color: #5b1010; }
.wc { flex: 1; min-height: 0; display: flex; flex-direction: column; background: #f0f0f0; border: 1px solid #fff; }
.wtop { flex: 1; min-height: 0; display: flex; border-bottom: 1px solid #999; }
.shapes { flex: 0 0 288px; border-right: 1px solid #999; padding: 0 3px 0 5px; display: flex; flex-direction: column; overflow: hidden; }
.legend { flex: 0 0 18px; padding-left: 4px; line-height: 16px; background: linear-gradient(#d0dbe6, #d0dbe6) 0 7px / 100% 1px no-repeat; }
.shaperow { flex: 1; min-height: 0; display: flex; justify-content: space-between; }
.cells { display: grid; grid-template-columns: 128px 128px; grid-auto-rows: 145px; gap: 3px; }
.cell { border: 2px solid #fff; border-right: 2px solid #a0a0a0; border-bottom: 2px solid #a0a0a0; padding: 1px; background: #f0f0f0; overflow: hidden; }
.cell svg { background: #6f93aa; }
.cell.picked { border-color: cyan; }
.vs.sv .thumb { height: 156px; margin-top: 1px; }
.preview { flex: 1; display: flex; flex-direction: column; padding-left: 2px; }
.pvhead { flex: 0 0 29px; border-bottom: 1px solid #999; }
.pvbody { flex: 1; min-height: 0; background: #000; overflow: hidden; }
.foot { display: flex; align-items: center; gap: 14px; }
.f1 { flex: 0 0 36px; padding: 4px 24px 0 336px; }
.f2 { flex: 0 0 46px; padding-right: 32px; }
.btn { width: 90px; height: 26px; border: 1px solid #707070; border-radius: 3px; background: linear-gradient(#f4f4f4 50%, #dedede 50%, #d2d2d2); box-shadow: inset 0 0 0 1px #fbfbfb; }
.focus { border-color: #2c9fc7; box-shadow: inset 0 0 0 1px #3ccbf2; background: linear-gradient(#eff6f9 50%, #d2e4ec 50%, #c4dae3); }
.forms { flex: 1; min-width: 0; display: grid; grid-template-columns: 304px 304px; grid-template-rows: 2px 207px 207px; gap: 3px; padding-left: 1px; align-content: start; }
.cutoff { border-bottom: 1px solid #888; background: #000; margin-right: 1px; }
.form { border: 1px solid #fff; border-right-color: #999; border-bottom-color: #999; padding: 0; }
.form svg { background: #000; }
.form.on svg { outline: 3px solid red; outline-offset: -3px; }
.vs.fv .thumb { margin-top: auto; height: 197px; }
.fv .ad { margin: 5px 0 4px; }
.fv { width: 17px; }
text { fill: #fff; }
.tw { font-family: "Liberation Serif", serif; text-anchor: middle; fill: #fff; }
.bd { font-weight: 700; }
.tm { font-family: "Liberation Mono", monospace; text-anchor: end; }
.tp { font-family: "Noto Sans CJK SC", sans-serif; font-weight: 300; text-anchor: middle; fill: #2a2080; }
.tg2 { fill: #0f0; font-family: "Liberation Mono", monospace; text-anchor: middle; }
.ol { fill: none; stroke: #b9bf4e; }
.cj text { font-family: "Noto Sans CJK SC", sans-serif; }
.cm { font-family: "Noto Sans CJK SC", sans-serif; text-anchor: middle; }
.gr text { fill: #0f0; font-family: "Liberation Mono", monospace; }
.ime { position: absolute; right: 0; top: 637px; width: 153px; height: 28px; background: #fff; border-radius: 5px 0 0 5px; box-shadow: 0 0 2px #999; display: flex; align-items: center; padding-left: 10px; gap: 8px; overflow: hidden; color: #2e6bd0; font-size: 15px; font-weight: 700; }
.ime i { width: 1px; height: 26px; background: #ddd; }
.marks { position: absolute; left: 0; top: 0; pointer-events: none; }
</style>
